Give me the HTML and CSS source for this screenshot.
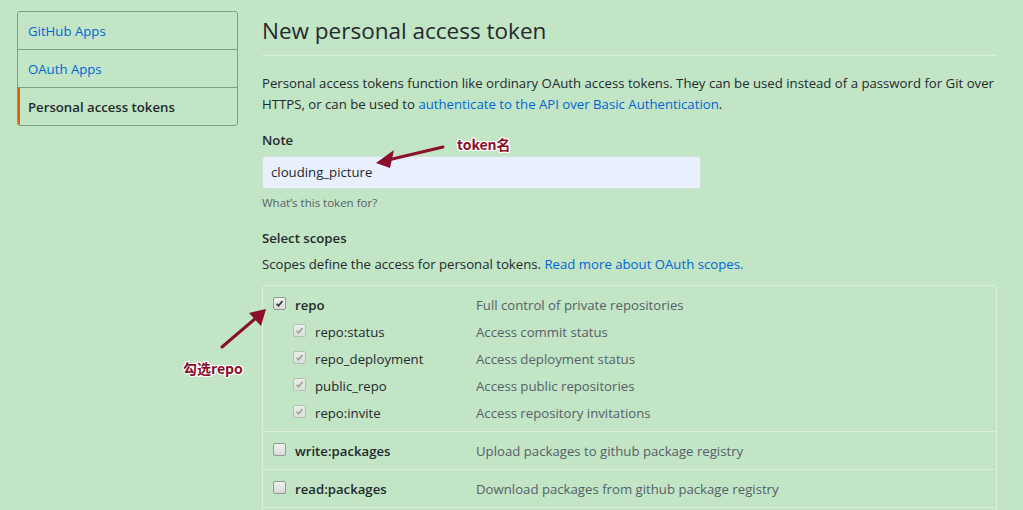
FILE: index.html
```html
<!DOCTYPE html>
<html>
<head>
<meta charset="utf-8">
<link rel="stylesheet" href="styles.css">
</head>
<body>
<div class="page">
  <nav class="menu">
    <a class="menu-item">GitHub Apps</a>
    <a class="menu-item">OAuth Apps</a>
    <a class="menu-item selected">Personal access tokens</a>
  </nav>
  <main class="content">
    <h2 class="title">New personal access token</h2>
    <p class="intro">Personal access tokens function like ordinary OAuth access tokens. They can be used instead of a password for Git over HTTPS, or can be used to <a class="link">authenticate to the API over Basic Authentication</a>.</p>
    <div class="label">Note</div>
    <div class="input">clouding_picture</div>
    <div class="note">What’s this token for?</div>
    <div class="label scopes-label">Select scopes</div>
    <p class="scopes-text">Scopes define the access for personal tokens. <a class="link">Read more about OAuth scopes.</a></p>
    <div class="scopes">
      <div class="group">
        <div class="line">
          <span class="name top"><span class="cb checked"><svg viewBox="0 0 13 13"><path d="M3 6.8 L5.4 9.2 L10 3.6" /></svg></span>repo</span>
          <span class="desc">Full control of private repositories</span>
        </div>
        <div class="line">
          <span class="name sub"><span class="cb checked dis"><svg viewBox="0 0 13 13"><path d="M3 6.8 L5.4 9.2 L10 3.6" /></svg></span>repo:status</span>
          <span class="desc">Access commit status</span>
        </div>
        <div class="line">
          <span class="name sub"><span class="cb checked dis"><svg viewBox="0 0 13 13"><path d="M3 6.8 L5.4 9.2 L10 3.6" /></svg></span>repo_deployment</span>
          <span class="desc">Access deployment status</span>
        </div>
        <div class="line">
          <span class="name sub"><span class="cb checked dis"><svg viewBox="0 0 13 13"><path d="M3 6.8 L5.4 9.2 L10 3.6" /></svg></span>public_repo</span>
          <span class="desc">Access public repositories</span>
        </div>
        <div class="line">
          <span class="name sub"><span class="cb checked dis"><svg viewBox="0 0 13 13"><path d="M3 6.8 L5.4 9.2 L10 3.6" /></svg></span>repo:invite</span>
          <span class="desc">Access repository invitations</span>
        </div>
      </div>
      <div class="group">
        <div class="line">
          <span class="name top"><span class="cb"></span>write:packages</span>
          <span class="desc">Upload packages to github package registry</span>
        </div>
      </div>
      <div class="group">
        <div class="line">
          <span class="name top"><span class="cb"></span>read:packages</span>
          <span class="desc">Download packages from github package registry</span>
        </div>
      </div>
      <div class="group empty"></div>
    </div>
  </main>
</div>
<div class="ann ann-token">token名</div>
<div class="ann ann-repo">勾选repo</div>
<svg class="arrows" width="1023" height="510" viewBox="0 0 1023 510">
  <line x1="443" y1="147" x2="388" y2="160" stroke="#8a0f2a" stroke-width="3" stroke-linecap="round"/>
  <polygon points="376,163 394,150 390,168" fill="#8a0f2a"/>
  <line x1="222" y1="347" x2="256" y2="318" stroke="#8a0f2a" stroke-width="3" stroke-linecap="round"/>
  <polygon points="266,309 261,326 249,313" fill="#8a0f2a"/>
</svg>
</body>
</html>
```
FILE: styles.css
```css
html, body {
  margin: 0;
  padding: 0;
  height: 100%;
  overflow: hidden;
}
body {
  background: #c1e5c5;
  font-family: "Open Sans", "Noto Sans", Arial, sans-serif;
  font-size: 13.2px;
  color: #24292e;
  position: relative;
}
.page {
  display: flex;
  align-items: flex-start;
  padding: 11px 0 0 17px;
}
.menu {
  width: 219px;
  border: 1px solid #7f9f83;
  border-radius: 3px;
  display: flex;
  flex-direction: column;
  flex-shrink: 0;
}
.menu-item {
  display: block;
  padding: 9px 10px 7px;
  line-height: 21px;
  color: #0366d6;
  border-bottom: 1px solid #7f9f83;
}
.menu-item:last-child {
  border-bottom: none;
}
.menu-item.selected {
  color: #24292e;
  font-weight: 600;
  border-left: 2px solid #e36209;
  padding-left: 8px;
  border-bottom-left-radius: 2px;
}
.content {
  margin-left: 24px;
  width: 735px;
}
.title {
  margin: 0;
  padding: 5px 0 9px;
  font-size: 22.5px;
  font-weight: 400;
  line-height: 30px;
  border-bottom: 1px solid #d9eedc;
}
.intro {
  margin: 17px 0 0;
  line-height: 21px;
}
.link {
  color: #0366d6;
}
.label {
  margin-top: 15px;
  font-weight: 600;
  line-height: 20px;
}
.input {
  margin-top: 6px;
  width: 421px;
  height: 31px;
  padding: 0 8px;
  line-height: 31px;
  background: #e8f0fe;
  border: 1px solid #d3e3dc;
  border-radius: 3px;
  color: #24292e;
}
.note {
  margin-top: 5px;
  font-size: 11.5px;
  line-height: 18px;
  color: #586069;
}
.scopes-label {
  margin-top: 16px;
}
.scopes-text {
  margin: 6px 0 0;
  line-height: 21px;
}
.scopes {
  margin-top: 10px;
  border: 1px solid #dcefde;
  border-radius: 3px;
}
.group {
  padding: 5px 10px;
  border-top: 1px solid #dcefde;
}
.group:first-child {
  border-top: none;
}
.group.empty {
  height: 27px;
}
.line {
  display: flex;
  align-items: center;
  height: 27px;
}
.name {
  display: flex;
  align-items: center;
  width: 203px;
  flex-shrink: 0;
}
.name.top {
  font-weight: 600;
}
.name.sub {
  padding-left: 20px;
  width: 183px;
}
.cb {
  display: inline-flex;
  width: 11px;
  height: 11px;
  margin-right: 9px;
  border: 1px solid #8f9a91;
  border-radius: 2px;
  background: linear-gradient(#f2f2f2, #d9d9d9);
  box-sizing: content-box;
  position: relative;
  top: -1px;
}
.cb svg {
  width: 11px;
  height: 11px;
}
.cb path {
  fill: none;
  stroke: #333;
  stroke-width: 2;
}
.cb.dis {
  border-color: #b5c0b7;
  background: linear-gradient(#e9efe9, #d9e0da);
}
.cb.dis path {
  stroke: #9aa39b;
}
.desc {
  color: #586069;
}
.ann {
  position: absolute;
  font-family: "Noto Sans CJK SC", "Noto Sans", sans-serif;
  font-weight: 700;
  font-size: 14px;
  color: #8a0f2a;
  text-shadow: 1px 0 0 #fff, -1px 0 0 #fff, 0 1px 0 #fff, 0 -1px 0 #fff, 1px 1px 0 #fff, -1px -1px 0 #fff, 1px -1px 0 #fff, -1px 1px 0 #fff;
  line-height: 18px;
}
.ann-token {
  left: 457px;
  top: 135px;
}
.ann-repo {
  left: 183px;
  top: 359px;
}
.arrows {
  position: absolute;
  left: 0;
  top: 0;
  pointer-events: none;
}
```
